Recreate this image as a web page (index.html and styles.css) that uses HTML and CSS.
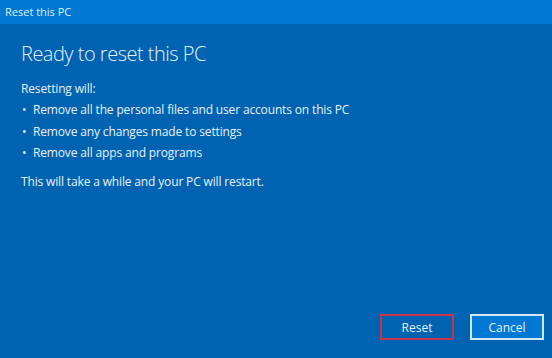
FILE: index.html
```html
<!DOCTYPE html>
<html>
  <head>
    <meta charset="utf-8" />
    <title>Reset this PC</title>
    <link rel="stylesheet" href="styles.css">
  </head>
  <body>
    <!-- Window title bar -->
    <div class="titlebar">Reset this PC</div>

    <!-- Dialog content -->
    <div class="dialog">
      <h1>Ready to reset this PC</h1>
      <p class="lead">Resetting will:</p>
      <ul class="steps">
        <li>Remove all the personal files and user accounts on this PC</li>
        <li>Remove any changes made to settings</li>
        <li>Remove all apps and programs</li>
      </ul>
      <p class="note">This will take a while and your PC will restart.</p>

      <div class="actions">
        <button class="btn btn-reset">Reset</button>
        <button class="btn btn-cancel">Cancel</button>
      </div>
    </div>
  </body>
</html>
```

FILE: styles.css
```css
* {
  box-sizing: border-box;
  margin: 0;
  padding: 0;
}

html, body {
  height: 100%;
}

body {
  font-family: 'Open Sans', 'Noto Sans', sans-serif;
  background-color: #0063b1;
  color: #e8f1f8;
  display: flex;
  flex-direction: column;
}

/* Title bar */
.titlebar {
  height: 24px;
  background-color: #0078d4;
  font-size: 11px;
  line-height: 24px;
  padding-left: 5px;
  color: #dfeefa;
}

/* Main area */
.dialog {
  flex: 1;
  display: flex;
  flex-direction: column;
  padding: 16px 8px 18px 21px;
}

.dialog h1 {
  font-weight: 300;
  font-size: 20px;
  letter-spacing: -0.5px;
  line-height: 28px;
  margin-bottom: 10px;
}

.lead,
.note,
.steps li {
  font-size: 12px;
  letter-spacing: -0.15px;
  line-height: 21.3px;
}

.steps {
  list-style: none;
  margin-bottom: 8px;
}

.steps li {
  position: relative;
  padding-left: 12px;
}

.steps li::before {
  content: "•";
  position: absolute;
  left: 1px;
}

.actions {
  margin-top: auto;
  display: flex;
  justify-content: flex-end;
  gap: 16px;
}

.btn {
  width: 74px;
  height: 26px;
  font-family: inherit;
  font-size: 12px;
  color: #e8f1f8;
  cursor: pointer;
}

.btn-reset {
  background-color: #0063b1;
  border: 2px solid #c8344a;
}

.btn-cancel {
  background-color: #0078d4;
  border: 2px solid #cfe8f6;
}
```
